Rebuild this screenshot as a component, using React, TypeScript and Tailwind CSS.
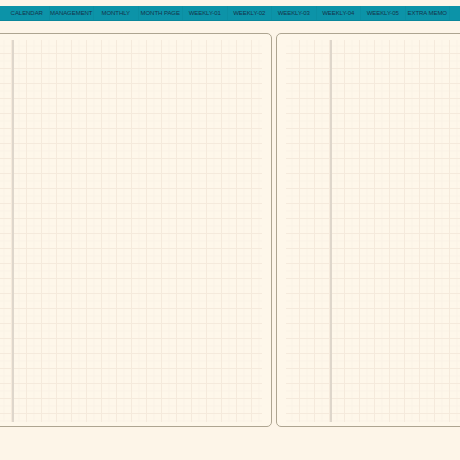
import React from 'react';

const tabs = [
  'CALENDAR',
  'MANAGEMENT',
  'MONTHLY',
  'MONTH PAGE',
  'WEEKLY-01',
  'WEEKLY-02',
  'WEEKLY-03',
  'WEEKLY-04',
  'WEEKLY-05',
  'EXTRA MEMO',
];

const Page: React.FC<{ className?: string }> = ({ className = '' }) => (
  <div
    className={`w-[314px] h-[394px] shrink-0 rounded-[5px] border-[1.5px] border-[#aea591] bg-[#fef7ea] px-[9px] pt-[6px] pb-[4px] ${className}`}
  >
    {/* Grid paper */}
    <div className="relative h-full w-full bg-[linear-gradient(to_right,#f5eadc_1px,transparent_1px),linear-gradient(to_bottom,#f5eadc_1px,transparent_1px),linear-gradient(to_right,#faf2e6_1px,transparent_1px),linear-gradient(to_bottom,#faf2e6_1px,transparent_1px)] bg-[size:15px_15px,15px_15px,7.5px_7.5px,7.5px_7.5px] bg-[position:-2px_-2px]">
      {/* margin line */}
      <div className="absolute left-[44px] top-0 bottom-0 w-[2px] bg-[#ded6cb]"></div>
    </div>
  </div>
);

export default function App() {
  return (
    <div className="w-[460px] h-[460px] overflow-hidden bg-[#fdf5e8] pt-[6px] font-['Liberation_Sans',Arial,sans-serif]">
      {/* Top tab bar */}
      <div className="h-[15px] bg-[#0c93a8] border-b border-[#0a879b] flex pl-[5px]">
        {tabs.map((t) => (
          <div
            key={t}
            className="w-[44.5px] shrink-0 flex items-center justify-center pt-[1px] border-r border-[#0b8ea2] text-[6px] tracking-[-0.05px] text-[#15344a] whitespace-nowrap"
          >
            {t}
          </div>
        ))}
      </div>

      {/* Spread */}
      <div className="flex gap-[4px] mt-[12px] ml-[-42px]">
        <Page />
        <Page />
      </div>
    </div>
  );
}
